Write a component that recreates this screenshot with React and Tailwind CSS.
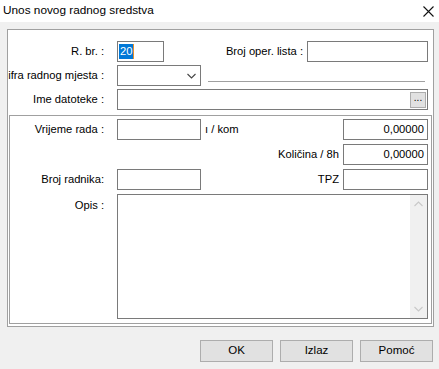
import React from 'react';

/* Windows-style dialog: "Unos novog radnog sredstva" */

const font = { fontFamily: '"Liberation Sans", Arial, sans-serif' };

function Box({ className = '', children, right }) {
  return (
    <div className={`h-[21px] border border-[#7a7a7a] bg-white flex items-center ${right ? 'justify-end pr-[3px]' : 'pl-[2px]'} ${className}`}>
      {children}
    </div>
  );
}

function Label({ children, w = 'w-[103px]' }) {
  return <div className={`${w} shrink-0 text-right pr-[6px] whitespace-nowrap`}>{children}</div>;
}

function Chevron({ up }) {
  return (
    <svg width="9" height="6" viewBox="0 0 9 6" className="block">
      <path d={up ? 'M0.5 5 L4.5 1 L8.5 5' : 'M0.5 1 L4.5 5 L8.5 1'} fill="none" stroke="currentColor" strokeWidth="1.1" />
    </svg>
  );
}

export default function App() {
  return (
    <div style={font} className="w-[439px] h-[369px] bg-[#f0f0f0] text-[11.2px] text-black overflow-hidden flex flex-col">
      {/* title bar */}
      <div className="h-[22px] bg-white flex items-center justify-between pl-[3px] pr-[5px] shrink-0">
        <span className="text-[11.8px] leading-none">Unos novog radnog sredstva</span>
        <svg width="11" height="11" viewBox="0 0 11 11">
          <path d="M0.5 0.5 L10.5 10.5 M10.5 0.5 L0.5 10.5" stroke="#111" strokeWidth="1.1" />
        </svg>
      </div>

      {/* main panel */}
      <div className="mt-[7px] ml-[7px] w-[427px] h-[298px] border border-[#a0a0a0] bg-white flex flex-col">
        {/* top section */}
        <div className="pt-[11px] pr-[5px] flex flex-col gap-[3px]">
          <div className="flex items-center">
            <Label w="w-[102px]">R. br. :</Label>
            <div className="ml-[7px] w-[47px] h-[21px] border border-[#7a7a7a] flex items-center pl-[1px]">
              <span className="bg-[#0078d7] text-white px-[1px] leading-[15px]">20</span>
              <span className="w-[1px] h-[15px] bg-[#e8902a]" />
            </div>
            <div className="flex-1 text-right pr-[4px] whitespace-nowrap">Broj oper. lista :</div>
            <Box className="w-[121px]" />
          </div>

          <div className="flex items-center">
            <Label w="w-[102px]">ifra radnog mjesta :</Label>
            <div className="ml-[7px] w-[84px] h-[21px] border border-[#7a7a7a] flex items-center justify-end pr-[4px] text-[#444]">
              <Chevron />
            </div>
            <div className="flex-1 ml-[7px] mr-[3px] h-[21px] flex items-end pb-[4px]">
              <div className="w-full h-[1px] bg-[#a0a0a0]" />
            </div>
          </div>

          <div className="flex items-center">
            <Label w="w-[102px]">Ime datoteke :</Label>
            <div className="ml-[7px] flex-1 h-[21px] border border-[#7a7a7a] flex items-center justify-end pr-[1px]">
              <div className="w-[16px] h-[16px] bg-[#e1e1e1] border border-[#adadad] flex items-end justify-center pb-[4px] text-[10px] leading-none">
                ...
              </div>
            </div>
          </div>
        </div>

        {/* lower group */}
        <div className="mt-[5px] mx-[1px] mb-[2px] flex-1 border border-[#a0a0a0] pt-[3px] pr-[3px] pb-[4px] flex flex-col gap-[4px]">
          <div className="flex items-center">
            <Label w="w-[100px]">Vrijeme rada :</Label>
            <Box className="ml-[7px] w-[84px]" />
            <div className="flex-1 pl-[4px]">ı / kom</div>
            <Box right className="w-[85px]">0,00000</Box>
          </div>

          <div className="flex items-center">
            <div className="flex-1 text-right pr-[4px]">Količina / 8h</div>
            <Box right className="w-[85px]">0,00000</Box>
          </div>

          <div className="flex items-center">
            <Label w="w-[100px]">Broj radnika:</Label>
            <Box className="ml-[7px] w-[84px]" />
            <div className="flex-1 text-right pr-[4px]">TPZ</div>
            <Box className="w-[85px]" />
          </div>

          <div className="flex items-start flex-1 min-h-0">
            <div className="w-[100px] shrink-0 text-right pr-[6px] pt-[3px]">Opis :</div>
            <div className="ml-[7px] flex-1 self-stretch border border-[#7a7a7a] flex justify-end">
              <div className="w-[17px] bg-[#f0f0f0] flex flex-col items-center justify-between py-[6px] text-[#c8c8c8]">
                <Chevron up />
                <Chevron />
              </div>
            </div>
          </div>
        </div>
      </div>

      {/* buttons */}
      <div className="mt-[13px] pr-[6px] flex justify-end gap-[7px]">
        {['OK', 'Izlaz', 'Pomoć'].map((t) => (
          <button key={t} className="w-[73px] h-[22px] bg-[#e1e1e1] border border-[#adadad] text-[11.5px] leading-none">
            {t}
          </button>
        ))}
      </div>
    </div>
  );
}
